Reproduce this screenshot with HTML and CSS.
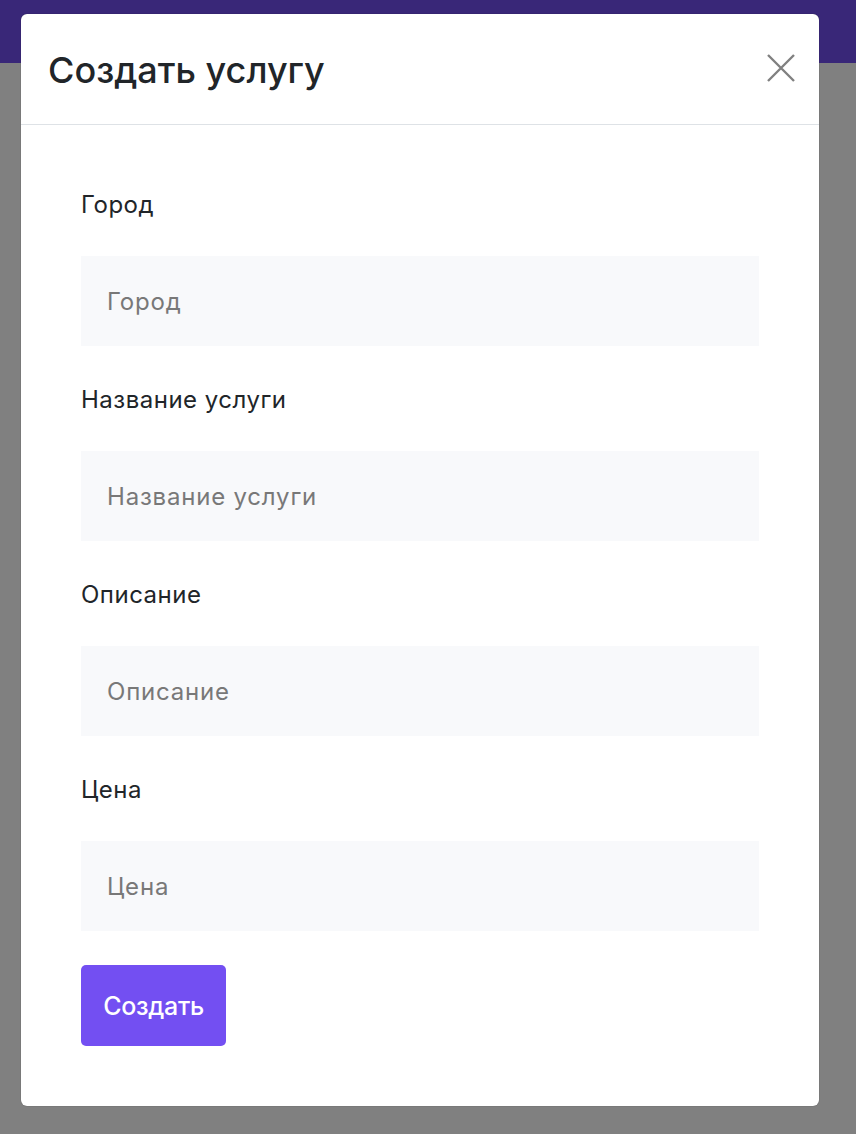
FILE: index.html
```html
<!DOCTYPE html>
<html lang="ru">
<head>
<meta charset="utf-8">
<title>Создать услугу</title>
<link rel="stylesheet" href="styles.css">
</head>
<body>
<div class="topbar"></div>
<div class="overlay">
  <div class="modal">
    <div class="modal-header">
      <h2 class="modal-title">Создать услугу</h2>
      <button class="close" aria-label="Закрыть">
        <svg width="28" height="28" viewBox="0 0 28 28"><path d="M1 1L27 27M27 1L1 27" stroke="#808080" stroke-width="2.4" fill="none"/></svg>
      </button>
    </div>
    <form class="modal-body">
      <div class="group">
        <label class="label">Город</label>
        <input class="input" type="text" placeholder="Город">
      </div>
      <div class="group">
        <label class="label">Название услуги</label>
        <input class="input" type="text" placeholder="Название услуги">
      </div>
      <div class="group">
        <label class="label">Описание</label>
        <input class="input" type="text" placeholder="Описание">
      </div>
      <div class="group">
        <label class="label">Цена</label>
        <input class="input" type="text" placeholder="Цена">
      </div>
      <button class="submit" type="button">Создать</button>
    </form>
  </div>
</div>
</body>
</html>
```
FILE: styles.css
```css
* { box-sizing: border-box; }
html, body { margin: 0; padding: 0; }
body {
  background: #808080;
  font-family: Inter, "Noto Sans", sans-serif;
  color: #212529;
  height: 1134px;
  overflow: hidden;
}
.topbar {
  height: 63px;
  background: #392778;
}
.overlay {
  position: absolute;
  inset: 0;
}
.modal {
  position: absolute;
  left: 21px;
  top: 14px;
  width: 798px;
  height: 1092px;
  background: #fff;
  border-radius: 6px;
  box-shadow: 0 0 1px rgba(0,0,0,0.5);
}
.modal-header {
  height: 111px;
  border-bottom: 1px solid #dee2e6;
  display: flex;
  align-items: center;
  justify-content: space-between;
  padding: 0 24px 0 27px;
}
.modal-title {
  margin: 0;
  font-size: 36px;
  font-weight: 500;
  line-height: 1.2;
  color: #212529;
  letter-spacing: 0;
  padding-top: 4px;
}
.close {
  background: none;
  border: 0;
  padding: 0;
  width: 28px;
  height: 28px;
  display: flex;
  margin-bottom: 3px;
}
.modal-body {
  padding: 65px 60px 60px;
  display: flex;
  flex-direction: column;
}
.group {
  display: flex;
  flex-direction: column;
  gap: 36px;
  margin-bottom: 39px;
}
.group:last-of-type { margin-bottom: 34px; }
.label {
  font-size: 24px;
  line-height: 30px;
  letter-spacing: 0.5px;
  color: #212529;
}
.input {
  height: 90px;
  border: 0;
  background: #f8f9fb;
  padding: 0 26px;
  font-family: inherit;
  font-size: 24px;
  letter-spacing: 0.8px;
  color: #212529;
  outline: none;
}
.input::placeholder { color: #787878; }
.submit {
  align-self: flex-start;
  width: 145px;
  height: 81px;
  border: 0;
  border-radius: 5px;
  background: #734ff2;
  color: #fff;
  font-family: inherit;
  font-size: 25px;
  font-weight: 500;
  letter-spacing: -0.3px;
}
```
